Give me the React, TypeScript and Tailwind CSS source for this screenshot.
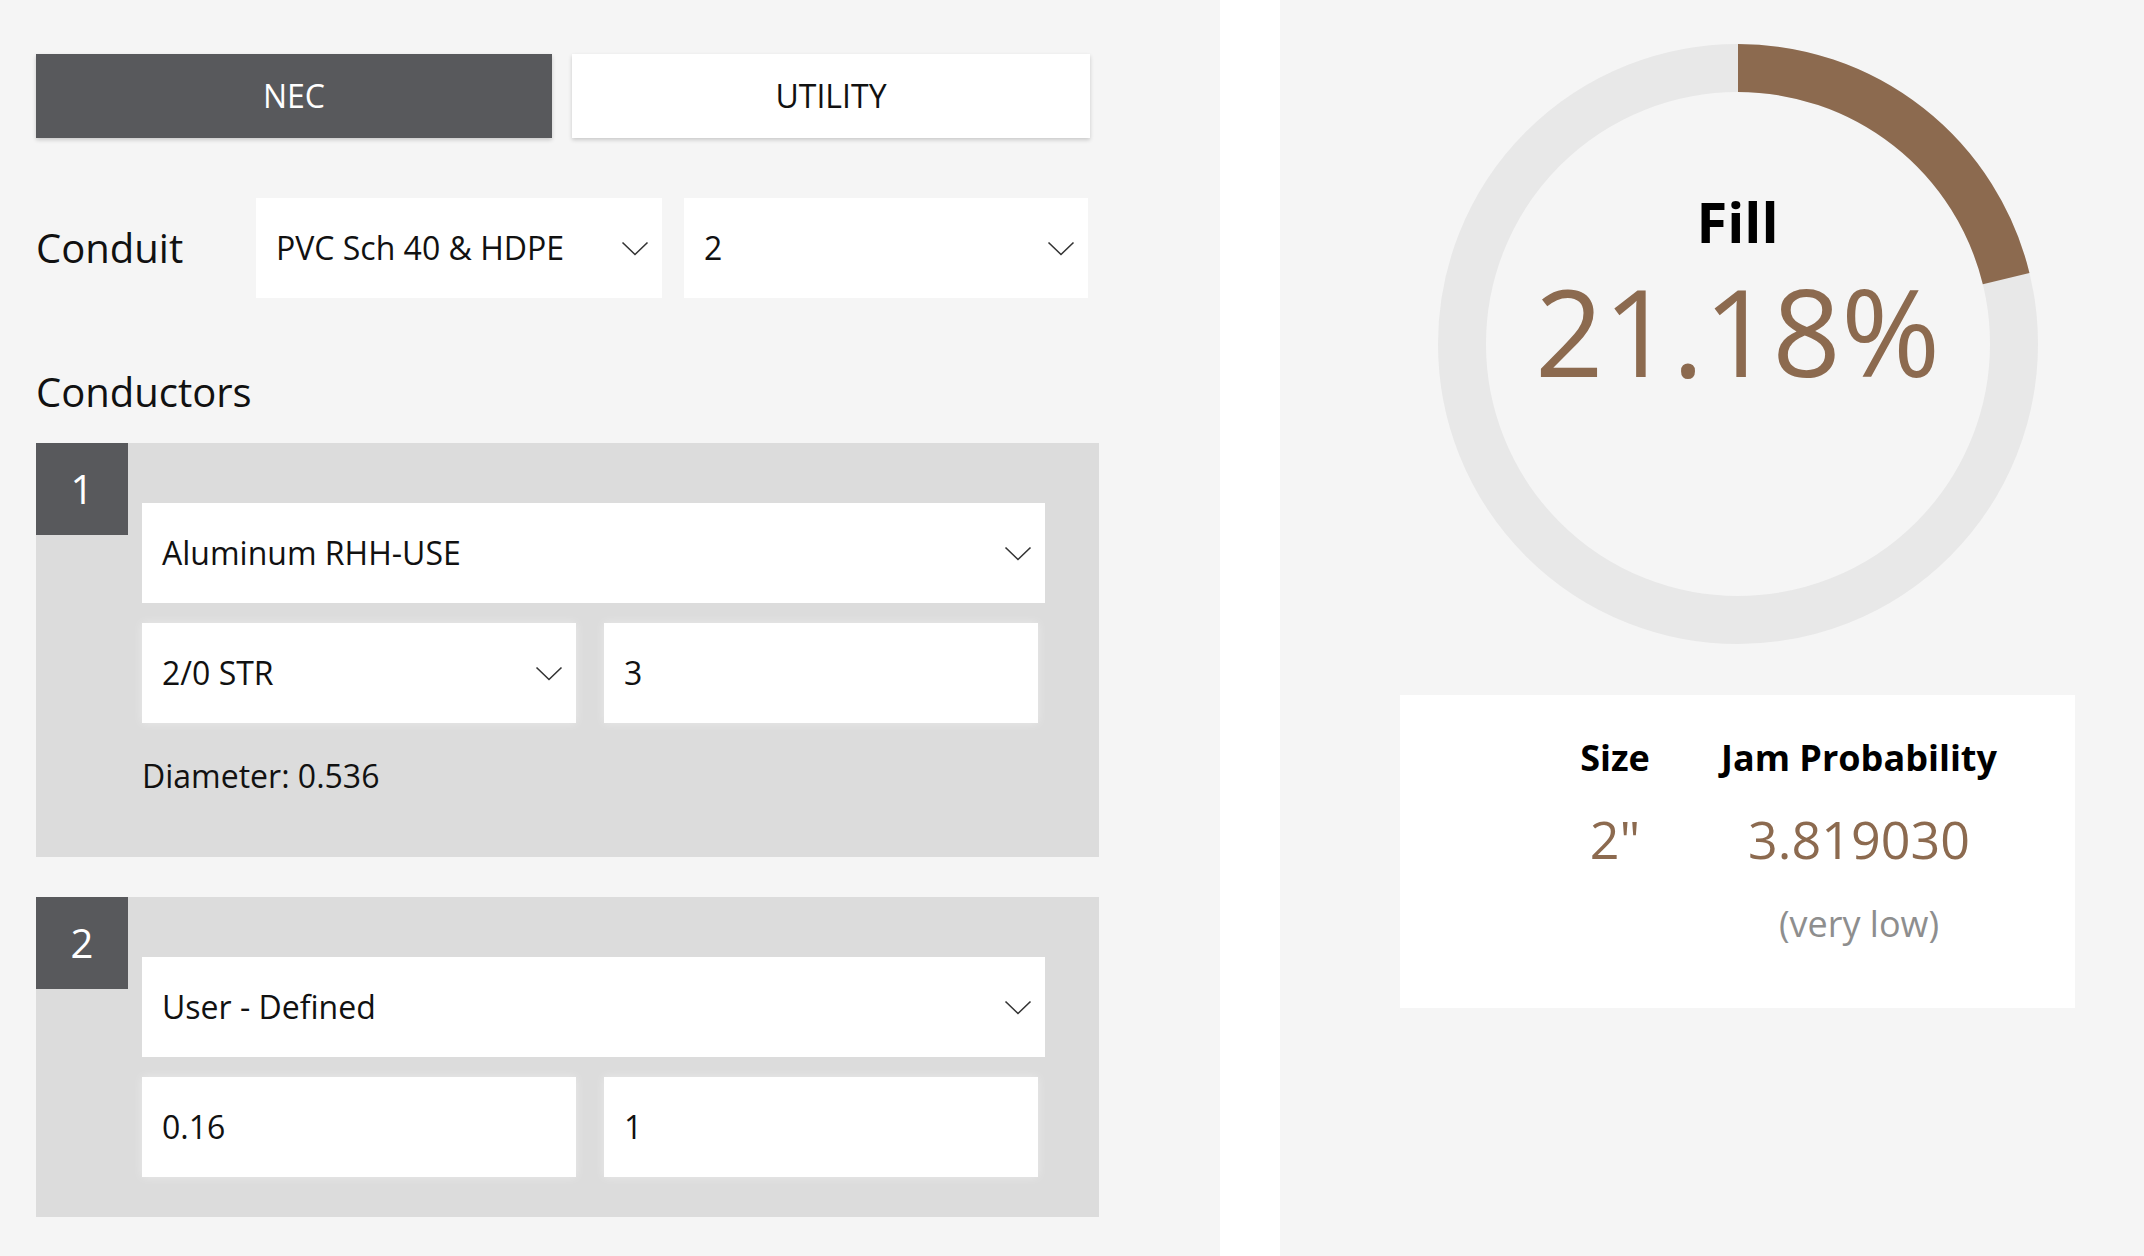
import React from "react";

function Chevron() {
  return (
    <svg width="28" height="15" viewBox="0 0 28 15" className="shrink-0">
      <polyline points="1.5,1.5 14,13.5 26.5,1.5" fill="none" stroke="#333" strokeWidth="1.6" />
    </svg>
  );
}

function Select({ value, className }: { value: string; className: string }) {
  return (
    <div className={`flex h-[100px] items-center justify-between bg-white pl-[20px] pr-[13px] text-[32px] text-[#111] ${className}`}>
      <span>{value}</span>
      <Chevron />
    </div>
  );
}

function Input({ value, className }: { value: string; className: string }) {
  return (
    <div className={`flex h-[100px] items-center bg-white pl-[20px] text-[32px] text-[#111] ${className}`}>
      {value}
    </div>
  );
}

function Badge({ n }: { n: string }) {
  return (
    <div className="flex h-[92px] w-[92px] shrink-0 items-center justify-center bg-[#58595c] text-[40px] text-white">
      {n}
    </div>
  );
}

export default function App() {
  const r = 276;
  const c = 2 * Math.PI * r;
  const pct = 21.18;
  return (
    <div className="flex h-[1256px] w-[2144px] bg-[#f5f5f5] font-['Open_Sans',sans-serif] text-[#111]">
      {/* Left panel */}
      <div className="w-[1220px] shrink-0 pl-[36px] pt-[54px]">
        <div className="flex gap-[20px]">
          <div className="flex h-[84px] w-[516px] items-center justify-center bg-[#58595c] text-[32px] text-white shadow-[0_2px_4px_rgba(0,0,0,0.18)]">
            NEC
          </div>
          <div className="flex h-[84px] w-[518px] items-center justify-center bg-white text-[32px] text-[#111] shadow-[0_2px_4px_rgba(0,0,0,0.18)]">
            UTILITY
          </div>
        </div>

        <div className="mt-[60px] flex h-[100px] items-center">
          <div className="w-[220px] text-[40px]">Conduit</div>
          <Select value="PVC Sch 40 & HDPE" className="w-[406px]" />
          <Select value="2" className="ml-[22px] w-[404px]" />
        </div>

        <div className="mt-[67px] text-[40px] leading-[54px]">Conductors</div>

        <div className="mt-[24px] flex w-[1063px] bg-[#dcdcdc]">
          <Badge n="1" />
          <div className="ml-[14px] w-[903px] pb-[59px] pt-[60px]">
            <Select value="Aluminum RHH-USE" className="w-[903px]" />
            <div className="mt-[20px] flex gap-[28px]">
              <Select value="2/0 STR" className="w-[434px] shadow-[0_0_10px_rgba(255,255,255,0.4)]" />
              <Input value="3" className="w-[434px] shadow-[0_0_10px_rgba(255,255,255,0.4)]" />
            </div>
            <div className="mt-[31px] text-[32px] leading-[44px]">Diameter: 0.536</div>
          </div>
        </div>

        <div className="mt-[40px] flex w-[1063px] bg-[#dcdcdc]">
          <Badge n="2" />
          <div className="ml-[14px] w-[903px] pb-[40px] pt-[60px]">
            <Select value="User - Defined" className="w-[903px]" />
            <div className="mt-[20px] flex gap-[28px]">
              <Input value="0.16" className="w-[434px] shadow-[0_0_10px_rgba(255,255,255,0.4)]" />
              <Input value="1" className="w-[434px] shadow-[0_0_10px_rgba(255,255,255,0.4)]" />
            </div>
          </div>
        </div>
      </div>

      {/* Divider strip */}
      <div className="w-[60px] shrink-0 bg-white" />

      {/* Right panel */}
      <div className="flex-1 pl-[120px] pt-[44px]">
        <div className="flex w-[675px] flex-col items-center">
          <div className="relative h-[600px] w-[600px]">
            <svg width="600" height="600" viewBox="0 0 600 600">
              <circle cx="300" cy="300" r={r} fill="none" stroke="#e8e8e8" strokeWidth="48" />
              <circle
                cx="300"
                cy="300"
                r={r}
                fill="none"
                stroke="#8c6a4f"
                strokeWidth="48"
                strokeDasharray={`${(c * pct) / 100} ${c}`}
                transform="rotate(-90 300 300)"
              />
            </svg>
            <div className="absolute inset-0 flex flex-col items-center">
              <div className="mt-[157px] text-[56px] font-bold leading-[40px] text-black">Fill</div>
              <div className="mt-[40px] text-[120px] leading-[100px] text-[#8c6a4f]">21.18%</div>
            </div>
          </div>
          <div className="mt-[51px] h-[313px] w-[675px] bg-white pl-[145px] pt-[39px]">
            <div className="grid grid-cols-[140px_330px] gap-x-[9px] text-center">
              <div className="text-[36px] font-bold leading-[48px] text-black">Size</div>
              <div className="text-[36px] font-bold leading-[48px] text-black">Jam Probability</div>
              <div className="mt-[22px] text-[52px] leading-[70px] text-[#8c6a4f]">2"</div>
              <div className="mt-[22px] text-[52px] leading-[70px] text-[#8c6a4f]">3.819030</div>
              <div />
              <div className="mt-[26px] text-[36px] leading-[48px] text-[#8e8e8e]">(very low)</div>
            </div>
          </div>
        </div>
      </div>
    </div>
  );
}
